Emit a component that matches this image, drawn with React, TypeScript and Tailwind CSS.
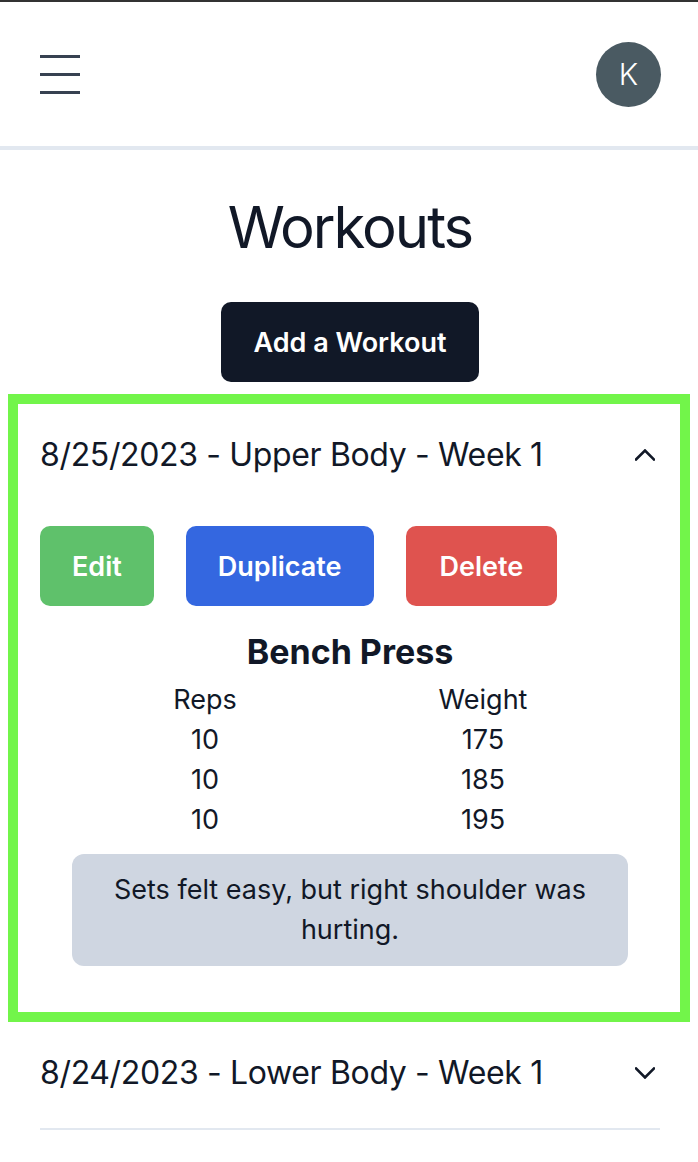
import { useState } from "react";

interface WorkoutSet {
  reps: number;
  weight: number;
}

interface Workout {
  id: string;
  title: string;
  exercise: string;
  sets: WorkoutSet[];
  note: string;
}

const workouts: Workout[] = [
  {
    id: "w1",
    title: "8/25/2023 - Upper Body - Week 1",
    exercise: "Bench Press",
    sets: [
      { reps: 10, weight: 175 },
      { reps: 10, weight: 185 },
      { reps: 10, weight: 195 },
    ],
    note: "Sets felt easy, but right shoulder was hurting.",
  },
  {
    id: "w2",
    title: "8/24/2023 - Lower Body - Week 1",
    exercise: "Squat",
    sets: [],
    note: "",
  },
];

function Chevron({ up }: { up: boolean }) {
  return (
    <svg width="20" height="12" viewBox="0 0 20 12" fill="none" className="mr-[5px]">
      <polyline
        points={up ? "1,10.5 10,1.5 19,10.5" : "1,1.5 10,10.5 19,1.5"}
        stroke="#111827"
        strokeWidth="2.6"
        strokeLinecap="square"
      />
    </svg>
  );
}

export default function App() {
  const [openId, setOpenId] = useState<string | null>("w1");

  return (
    <div className="min-h-screen bg-white border-t-2 border-[#333333] font-['Inter',sans-serif] text-[#111827]">
      {/* top bar */}
      <header className="h-[148px] flex items-center justify-between pl-10 pr-[37px] border-b-4 border-[#e2e8f0]">
        <button className="flex flex-col gap-[15px]">
          <span className="block w-10 h-[3px] bg-[#374151]"></span>
          <span className="block w-10 h-[3px] bg-[#374151]"></span>
          <span className="block w-10 h-[3px] bg-[#374151]"></span>
        </button>
        <div className="w-[65px] h-[65px] rounded-full bg-[#4a5a62] flex items-center justify-center text-white text-[30px] font-light">
          K
        </div>
      </header>

      <main className="pl-10 pr-[38px]">
        <h1 className="mt-[41px] text-center text-[58px] leading-[72px] tracking-[-2px] font-normal">
          Workouts
        </h1>
        <div className="mt-[39px] flex justify-center">
          <button className="h-[80px] px-8 pt-[3px] rounded-[10px] bg-[#111827] text-white text-[27px] font-semibold">
            Add a Workout
          </button>
        </div>

        <div className="mt-3">
          {workouts.map((workout) => {
            const open = openId === workout.id;
            return (
              <div
                key={workout.id}
                className={
                  open
                    ? "-ml-8 -mr-[30px] border-[10px] border-[#72f54a] pl-[22px] pr-5 pb-[46px]"
                    : "border-b-2 border-[#e2e8f0] pb-[31px]"
                }
              >
                <button
                  onClick={() => setOpenId(open ? null : workout.id)}
                  className="w-full pt-[27px] flex items-center justify-between text-[32px] leading-[48px] tracking-[-0.35px] text-left"
                >
                  <span>{workout.title}</span>
                  <Chevron up={open} />
                </button>

                {open && (
                  <div>
                    <div className="mt-[47px] flex gap-8">
                      <button className="h-[80px] px-8 pt-[3px] rounded-[10px] bg-[#5fc16b] text-white text-[27px] font-semibold">
                        Edit
                      </button>
                      <button className="h-[80px] px-8 pt-[3px] rounded-[10px] bg-[#3467e0] text-white text-[27px] font-semibold">
                        Duplicate
                      </button>
                      <button className="h-[80px] px-[34px] pt-[3px] rounded-[10px] bg-[#df534f] text-white text-[27px] font-semibold">
                        Delete
                      </button>
                    </div>

                    <h2 className="mt-6 text-center text-[34px] leading-[44px] font-bold">
                      {workout.exercise}
                    </h2>

                    <div className="mt-[6px] ml-[26px] w-[556px] grid grid-cols-2 text-center text-[27px] leading-[40px]">
                      <div>Reps</div>
                      <div>Weight</div>
                      {workout.sets.map((set, i) => (
                        <div key={i} className="contents">
                          <div>{set.reps}</div>
                          <div>{set.weight}</div>
                        </div>
                      ))}
                    </div>

                    <div className="mt-[14px] mx-8 rounded-xl bg-[#cfd6e1] px-4 py-4 text-center text-[27px] leading-[40px]">
                      {workout.note}
                    </div>
                  </div>
                )}
              </div>
            );
          })}
        </div>
      </main>
    </div>
  );
}
